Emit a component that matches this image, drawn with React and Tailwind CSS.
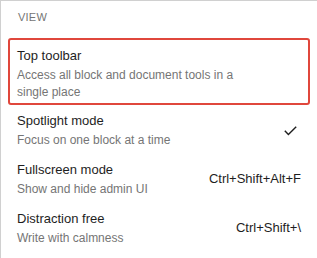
import React from "react";

const items = [
  { title: "Spotlight mode", desc: "Focus on one block at a time", right: "check" },
  { title: "Fullscreen mode", desc: "Show and hide admin UI", right: "Ctrl+Shift+Alt+F" },
  { title: "Distraction free", desc: "Write with calmness", right: "Ctrl+Shift+\\" },
];

function Check() {
  return (
    <svg width="13" height="10" viewBox="0 0 13 10" fill="none">
      <path d="M0.8 4.8 L4.4 8.6 L12.2 0.8" stroke="#1e1e1e" strokeWidth="1.4" />
    </svg>
  );
}

export default function App() {
  return (
    <div className="w-[317px] h-[258px] bg-white overflow-hidden" style={{ fontFamily: '"Liberation Sans", Arial, sans-serif' }}>
      <div className="w-[330px] h-[270px] border-t border-l border-[#d0d0d0] pl-[7px] pt-[2px]">
        <div className="w-[302px]">
          <div className="pl-[10px] h-[28px] flex items-center text-[11px] font-medium uppercase text-[#757575] tracking-[0.02em]">
            View
          </div>
          <div className="mt-[7px] border-2 border-[#e0473c] rounded-[3px] px-[7px] pt-[6px] pb-[2px]">
            <div className="text-[13px] leading-[20px] text-[#1e1e1e]">Top toolbar</div>
            <div className="mt-[1px] max-w-[230px] text-[12px] leading-[17px] text-[#757575]">
              Access all block and document tools in a single place
            </div>
          </div>
          {items.map((it) => (
            <div key={it.title} className="border-2 border-transparent px-[7px] pt-[4px] pb-[3px] flex items-center">
              <div className="flex-1">
                <div className="text-[13px] leading-[20px] text-[#1e1e1e]">{it.title}</div>
                <div className="mt-[1px] max-w-[230px] text-[12px] leading-[17px] text-[#757575]">{it.desc}</div>
              </div>
              <div className="text-[13px] text-[#1e1e1e]">
                {it.right === "check" ? (
                  <div className="pr-[4px] mt-[2px]">
                    <Check />
                  </div>
                ) : (
                  it.right
                )}
              </div>
            </div>
          ))}
        </div>
      </div>
    </div>
  );
}
